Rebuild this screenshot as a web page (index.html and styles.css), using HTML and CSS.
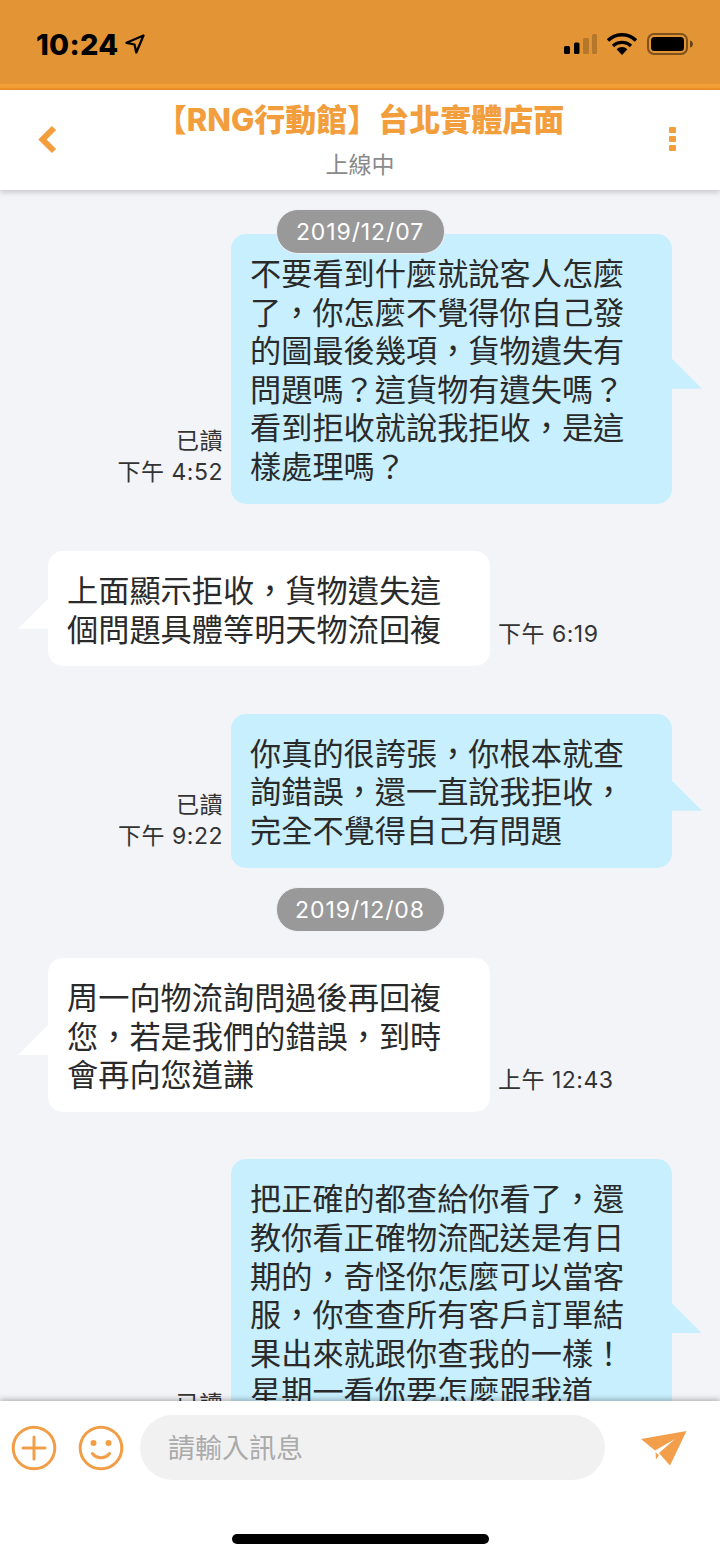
FILE: index.html
```html
<!DOCTYPE html>
<html lang="zh-TW">
<head>
<meta charset="utf-8">
<title>RNG</title>
<link rel="stylesheet" href="styles.css">
</head>
<body>
<div class="app">
  <div class="status">
    <div class="status-left">
      <span class="clock">10:24</span>
      <svg class="loc" width="20" height="20" viewBox="0 0 20 20"><path d="M18.500 1.500 1.500 8.800l8 1.700 1.800 8z" fill="none" stroke="#000" stroke-width="2.300" stroke-linejoin="round"/></svg>
    </div>
    <div class="status-right">
      <svg width="33" height="21" viewBox="0 0 33 21"><rect x="0" y="13" width="6" height="8" rx="1.500" fill="#000"/><rect x="10" y="9.500" width="5.500" height="11.500" rx="1.500" fill="#000"/><rect x="19" y="5" width="6" height="16" rx="1.500" fill="#000" opacity=".2"/><rect x="28" y="1" width="5" height="20" rx="1.500" fill="#000" opacity=".2"/></svg>
      <svg width="30" height="22" viewBox="0 0 30 22"><path d="M1 7.500a20 20 0 0 1 28 0" fill="none" stroke="#000" stroke-width="3.600"/><path d="M6 13a13 13 0 0 1 18 0" fill="none" stroke="#000" stroke-width="3.400"/><path d="M15 22 9.600 16.200a8 8 0 0 1 10.800 0z" fill="#000"/></svg>
      <svg width="46" height="22" viewBox="0 0 46 22"><rect x="1" y="1" width="39" height="20" rx="6" fill="none" stroke="#000" stroke-opacity=".45" stroke-width="2"/><rect x="4" y="4" width="33" height="14" rx="3.500" fill="#000"/><path d="M43 7.500c2 .5 3 2 3 3.500s-1 3-3 3.500z" fill="#000" opacity=".55"/></svg>
    </div>
  </div>
  <header class="header">
    <div class="side">
      <svg width="20" height="29" viewBox="0 0 20 29"><path d="M16 3 4.500 14.500 16 26" fill="none" stroke="#f29e3d" stroke-width="6"/></svg>
    </div>
    <div class="heading">
      <div class="title">【RNG行動館】台北實體店面</div>
      <div class="presence">上線中</div>
    </div>
    <div class="side side-end">
      <span class="dots"><i></i><i></i><i></i></span>
    </div>
  </header>
  <main class="list">
    <div class="pill pill-first">2019/12/07</div>
    <div class="row row-out">
      <div class="meta"><span>已讀</span><span>下午 4:52</span></div>
      <div class="bubble bubble-out">不要看到什麼就說客人怎麼了，你怎麼不覺得你自己發的圖最後幾項，貨物遺失有問題嗎？這貨物有遺失嗎？看到拒收就說我拒收，是這樣處理嗎？</div>
    </div>
    <div class="row row-in">
      <div class="bubble bubble-in">上面顯示拒收，貨物遺失這個問題具體等明天物流回複</div>
      <div class="meta"><span>下午 6:19</span></div>
    </div>
    <div class="row row-out">
      <div class="meta"><span>已讀</span><span>下午 9:22</span></div>
      <div class="bubble bubble-out">你真的很誇張，你根本就查詢錯誤，還一直說我拒收，完全不覺得自己有問題</div>
    </div>
    <div class="pill">2019/12/08</div>
    <div class="row row-in">
      <div class="bubble bubble-in">周一向物流詢問過後再回複您，若是我們的錯誤，到時會再向您道謙</div>
      <div class="meta"><span>上午 12:43</span></div>
    </div>
    <div class="row row-out">
      <div class="meta"><span>已讀</span><span>下午 9:30</span></div>
      <div class="bubble bubble-out">把正確的都查給你看了，還教你看正確物流配送是有日期的，奇怪你怎麼可以當客服，你查查所有客戶訂單結果出來就跟你查我的一樣！星期一看你要怎麼跟我道歉！</div>
    </div>
  </main>
  <footer class="composer">
    <div class="composer-bar">
      <svg class="ic" width="46" height="46" viewBox="0 0 46 46"><circle cx="23" cy="23" r="20.800" fill="none" stroke="#f29e46" stroke-width="3"/><path d="M12 23h22M23 12v22" fill="none" stroke="#f29e46" stroke-width="3" stroke-linecap="round"/></svg>
      <svg class="ic" width="46" height="46" viewBox="0 0 46 46"><circle cx="23" cy="23" r="20.800" fill="none" stroke="#f29e46" stroke-width="3"/><circle cx="15.500" cy="18" r="3" fill="#f29e46"/><circle cx="30.500" cy="18" r="3" fill="#f29e46"/><path d="M14.500 28.500c4 5.500 13 5.500 17 0" fill="none" stroke="#f29e46" stroke-width="3" stroke-linecap="round"/></svg>
      <div class="input">請輸入訊息</div>
      <svg class="send" width="47" height="36" viewBox="0 0 47 36"><path d="M46.500 1 1 9l14 11.500L35 9 19 23l11 12.500z" fill="#f29e4b"/><path d="M15.500 22.500 19 25l-3 4.500z" fill="#f29e4b"/></svg>
    </div>
    <div class="home"></div>
  </footer>
</div>
</body>
</html>
```
FILE: styles.css
```css
* { box-sizing: border-box; }
html, body { margin: 0; padding: 0; }
body {
  font-family: "Noto Sans CJK TC", "Noto Sans", sans-serif;
  background: #fff;
  color: #333;
}
.app {
  width: 720px;
  height: 1559px;
  display: flex;
  flex-direction: column;
  overflow: hidden;
}
.status {
  height: 90px;
  flex: none;
  background: #e39535;
  border-bottom: 2px solid #ee9328;
  box-shadow: inset 0 -4px 0 #f29f38;
  display: flex;
  justify-content: space-between;
  padding: 33px 27px 0 36px;
}
.status-left { display: flex; align-items: flex-start; gap: 6px; }
.clock {
  font: 800 29px/24px Inter, sans-serif;
  color: #000;
  letter-spacing: .3px;
}
.loc { margin-top: 1px; }
.status-right { display: flex; align-items: flex-start; gap: 10px; }
.header {
  height: 100px;
  flex: none;
  background: #fff;
  display: flex;
  position: relative;
  z-index: 2;
  box-shadow: 0 2px 6px rgba(0, 0, 0, .2);
}
.side { width: 100px; flex: none; padding: 35px 0 0 38px; }
.side-end { display: flex; justify-content: flex-end; padding: 37px 44px 0 0; }
.dots { display: flex; flex-direction: column; gap: 3px; }
.dots i { width: 7px; height: 6px; border-radius: 1px; background: #f29e3d; }
.heading { flex: 1; text-align: center; padding-top: 10px; }
.title {
  font-family: Inter, "Noto Sans CJK TC", sans-serif;
  font-size: 31px;
  line-height: 40px;
  font-weight: 800;
  color: #f29e3d;
  white-space: nowrap;
}
.presence { font-size: 23px; line-height: 32px; margin-top: 7px; color: #8a8a8a; }
.list {
  flex: 1;
  min-height: 0;
  overflow: hidden;
  background: #f2f4f8;
  padding: 19px 48px 0;
}
.pill {
  position: relative;
  z-index: 1;
  width: 169px;
  height: 45px;
  margin: 20px auto 26px;
  border-radius: 22px;
  border: 1px solid #eef0f3;
  background: #999;
  color: #fff;
  font: 400 23px/45px Inter, sans-serif;
  letter-spacing: .9px;
  text-align: center;
}
.pill-first { margin: 0 auto -20px; }
.row {
  display: flex;
  align-items: flex-end;
  margin-bottom: 47.500px;
}
.row-out { justify-content: flex-end; }
.row-out + .pill { margin-top: -28px; }
.bubble {
  position: relative;
  flex: none;
  font-size: 31.200px;
  font-weight: 400;
  color: #2a2a2a;
  line-height: 38.600px;
  padding: 19px 40px 19px 19px;
  border-radius: 15px;
}
.bubble::after {
  content: "";
  position: absolute;
  top: 50%;
  margin-top: -10px;
  width: 30px;
  height: 30px;
}
.bubble-out { width: 441px; background: #c8effe; }
.bubble-out::after { left: 100%; background: #c8effe; clip-path: polygon(0 0, 100% 100%, 0 100%); }
.bubble-in { width: 442px; background: #fff; }
.bubble-in::after { right: 100%; background: #fff; clip-path: polygon(100% 0, 100% 100%, 0 100%); }
.meta {
  display: flex;
  flex-direction: column;
  font: 400 23px/31px Inter, "Noto Sans CJK TC", sans-serif;
  letter-spacing: .5px;
  color: #333;
  white-space: nowrap;
  padding-bottom: 16px;
}
.row-out .meta { align-items: flex-end; margin-right: 8px; }
.row-in .meta { margin-left: 8px; }
.composer {
  height: 158px;
  flex: none;
  background: #fff;
  position: relative;
  z-index: 2;
  box-shadow: 0 -2px 5px rgba(0, 0, 0, .25);
}
.composer-bar {
  display: flex;
  align-items: center;
  padding: 14px 33px 0 11px;
}
.ic { flex: none; margin-right: 21px; }
.ic + .ic { margin-right: 16px; }
.input {
  flex: none;
  width: 465px;
  height: 65px;
  border-radius: 33px;
  background: #f1f1f1;
  color: #aaa;
  font-size: 27px;
  line-height: 63px;
  padding-left: 28px;
}
.send { flex: none; margin-left: 35px; }
.home {
  width: 257px;
  height: 10px;
  border-radius: 5px;
  background: #000;
  margin: 54px auto 0;
}
```
